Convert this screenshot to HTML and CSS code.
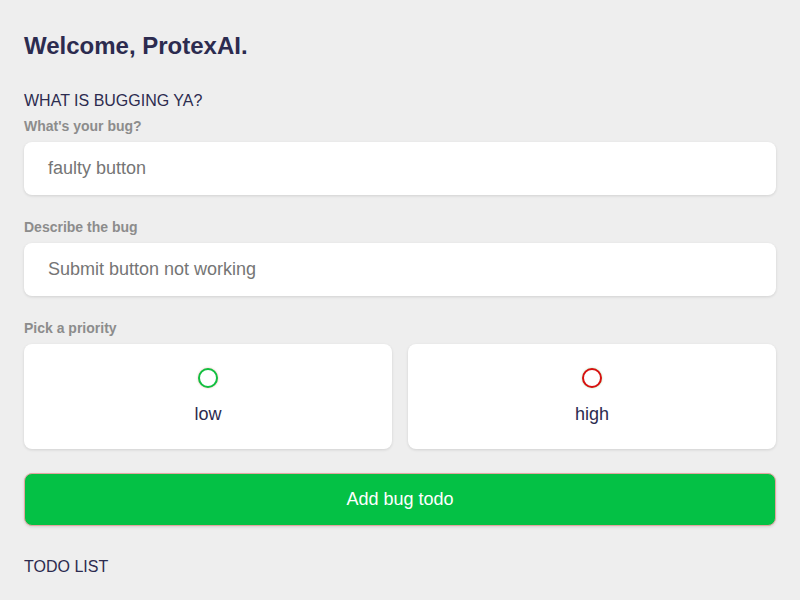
FILE: index.html
```html
<!DOCTYPE html>
<html>
<head>
<meta charset="utf-8">
<link rel="stylesheet" href="styles.css">
</head>
<body>
<main class="page">
  <h1 class="title">Welcome, ProtexAI.</h1>
  <h2 class="section">WHAT IS BUGGING YA?</h2>
  <form class="form">
    <label class="label">What's your bug?</label>
    <div class="input">faulty button</div>
    <label class="label spaced">Describe the bug</label>
    <div class="input">Submit button not working</div>
    <label class="label spaced">Pick a priority</label>
    <div class="priorities">
      <div class="card">
        <span class="dot dot-low"></span>
        <span class="card-text">low</span>
      </div>
      <div class="card">
        <span class="dot dot-high"></span>
        <span class="card-text">high</span>
      </div>
    </div>
    <button type="button" class="btn">Add bug todo</button>
  </form>
  <h2 class="section todo">TODO LIST</h2>
</main>
</body>
</html>
```
FILE: styles.css
```css
html, body {
  margin: 0;
  padding: 0;
  background: #eeeeee;
}
body {
  font-family: "Liberation Sans", Arial, sans-serif;
  color: #2c2b4f;
}
.page {
  padding: 32px 24px 24px;
}
.title {
  margin: 0;
  font-size: 24px;
  line-height: 28px;
  font-weight: 700;
  color: #2c2b4f;
}
.section {
  margin: 32px 0 0;
  font-size: 16px;
  line-height: 18px;
  font-weight: 400;
  color: #2c2b4f;
}
.form {
  display: flex;
  flex-direction: column;
  margin-top: 8px;
}
.label {
  font-size: 14px;
  line-height: 16px;
  font-weight: 700;
  color: #8c8c8c;
  margin-bottom: 8px;
}
.label.spaced {
  margin-top: 24px;
}
.input {
  height: 53px;
  box-sizing: border-box;
  background: #fff;
  border-radius: 8px;
  box-shadow: 0 1px 3px rgba(0,0,0,0.12);
  padding: 0 24px;
  display: flex;
  align-items: center;
  font-size: 18px;
  color: #757575;
}
.priorities {
  display: grid;
  grid-template-columns: 1fr 1fr;
  gap: 16px;
}
.card {
  height: 105px;
  background: #fff;
  border-radius: 8px;
  box-shadow: 0 1px 3px rgba(0,0,0,0.12);
  display: flex;
  flex-direction: column;
  align-items: center;
  padding-top: 24px;
  box-sizing: border-box;
}
.dot {
  width: 20px;
  height: 20px;
  box-sizing: border-box;
  border-radius: 50%;
  background: #fff;
}
.dot-low {
  border: 2px solid #10c040;
  box-shadow: 0 0 2px rgba(220,100,80,0.5);
}
.dot-high {
  border: 2px solid #d81010;
  box-shadow: 0 0 2px rgba(80,200,80,0.5);
}
.card-text {
  margin-top: 16px;
  font-size: 18px;
  line-height: 20px;
  color: #2c2b4f;
}
.btn {
  margin-top: 24px;
  height: 53px;
  border: 1px solid #e3a6a0;
  border-radius: 8px;
  background: #04c145;
  color: #fff;
  font-family: "Liberation Sans", Arial, sans-serif;
  font-size: 18px;
  box-shadow: 0 1px 3px rgba(0,0,0,0.12);
}
.todo {
  margin-top: 32px;
}
```
